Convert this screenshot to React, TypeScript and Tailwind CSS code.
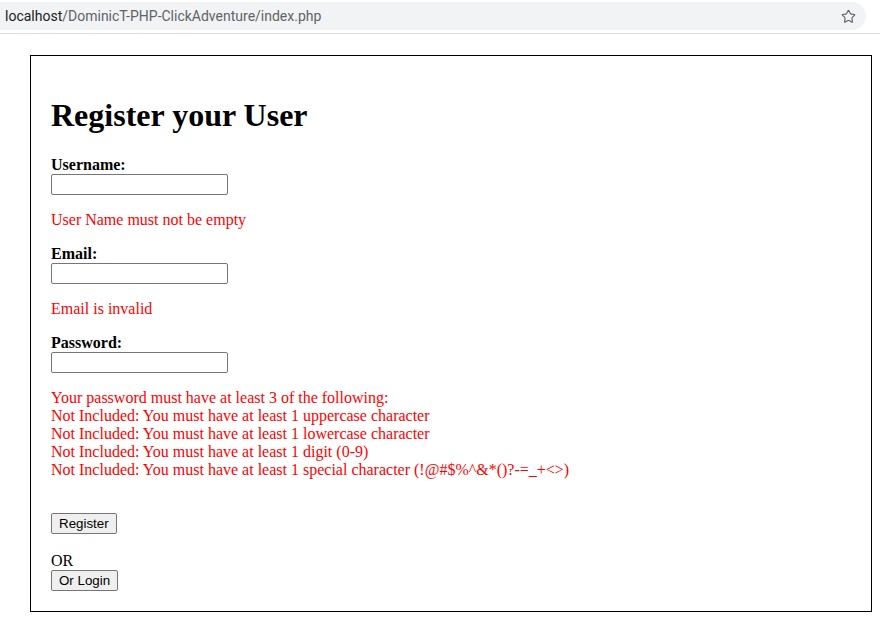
import { Star } from "lucide-react";

const serif = { fontFamily: '"Liberation Serif", "Times New Roman", serif' };

function Field({ label, error }: { label: string; error?: string }) {
  return (
    <div>
      <div className="h-[18px] text-[16px] font-bold leading-[18px]">{label}</div>
      <input
        type="text"
        className="block h-[21px] w-[177px] rounded-[2px] border border-[#767676] bg-white px-[2px] text-[13px] outline-none"
      />
      {error && <div className="mt-[16px] h-[18px] text-[16px] leading-[18px] text-[#ff0000]">{error}</div>}
    </div>
  );
}

function Btn({ children, className = "" }: { children: string; className?: string }) {
  return (
    <button
      className={`block h-[21px] rounded-[2px] border border-[#767676] bg-[#efefef] px-[7px] text-[13.33px] leading-[18px] text-black ${className}`}
      style={{ fontFamily: '"Liberation Sans", Arial, sans-serif' }}
    >
      {children}
    </button>
  );
}

export default function App() {
  const rules = [
    "Your password must have at least 3 of the following:",
    "Not Included: You must have at least 1 uppercase character",
    "Not Included: You must have at least 1 lowercase character",
    "Not Included: You must have at least 1 digit (0-9)",
    "Not Included: You must have at least 1 special character (!@#$%^&*()?-=_+<>)",
  ];

  return (
    <div className="h-[634px] w-[880px] overflow-hidden bg-white text-black">
      {/* browser address bar */}
      <div className="h-[34px] border-b border-[#dadce0] pt-[2px]">
        <div
          className="flex h-[28px] w-[866px] items-center justify-between rounded-r-full bg-[#f1f3f4] pl-[5px] pr-[10px] text-[14px]"
          style={{ fontFamily: 'Roboto, "Noto Sans", sans-serif' }}
        >
          <span>
            <span className="text-[#202124]">localhost</span>
            <span className="text-[#5f6368]">/DominicT-PHP-ClickAdventure/index.php</span>
          </span>
          <Star size={15} strokeWidth={1.8} className="text-[#5f6368]" />
        </div>
      </div>

      {/* page */}
      <div className="ml-[30px] mt-[21px] w-[842px] border border-black p-[20px]" style={serif}>
        <h1 className="mb-[22px] mt-[21px] h-[37px] text-[32px] font-bold leading-[37px]">Register your User</h1>

        <Field label="Username:" error="User Name must not be empty" />
        <div className="mt-[16px]">
          <Field label="Email:" error="Email is invalid" />
        </div>
        <div className="mt-[16px]">
          <Field label="Password:" />
        </div>

        <div className="mt-[16px] text-[16px] leading-[18px] text-[#ff0000]">
          {rules.map((r) => (
            <div key={r} className="h-[18px]">
              {r}
            </div>
          ))}
        </div>

        <Btn className="mt-[34px]">Register</Btn>

        <div className="mt-[17px] h-[19px] text-[16px] leading-[19px]">OR</div>
        <Btn>Or Login</Btn>
      </div>
    </div>
  );
}
